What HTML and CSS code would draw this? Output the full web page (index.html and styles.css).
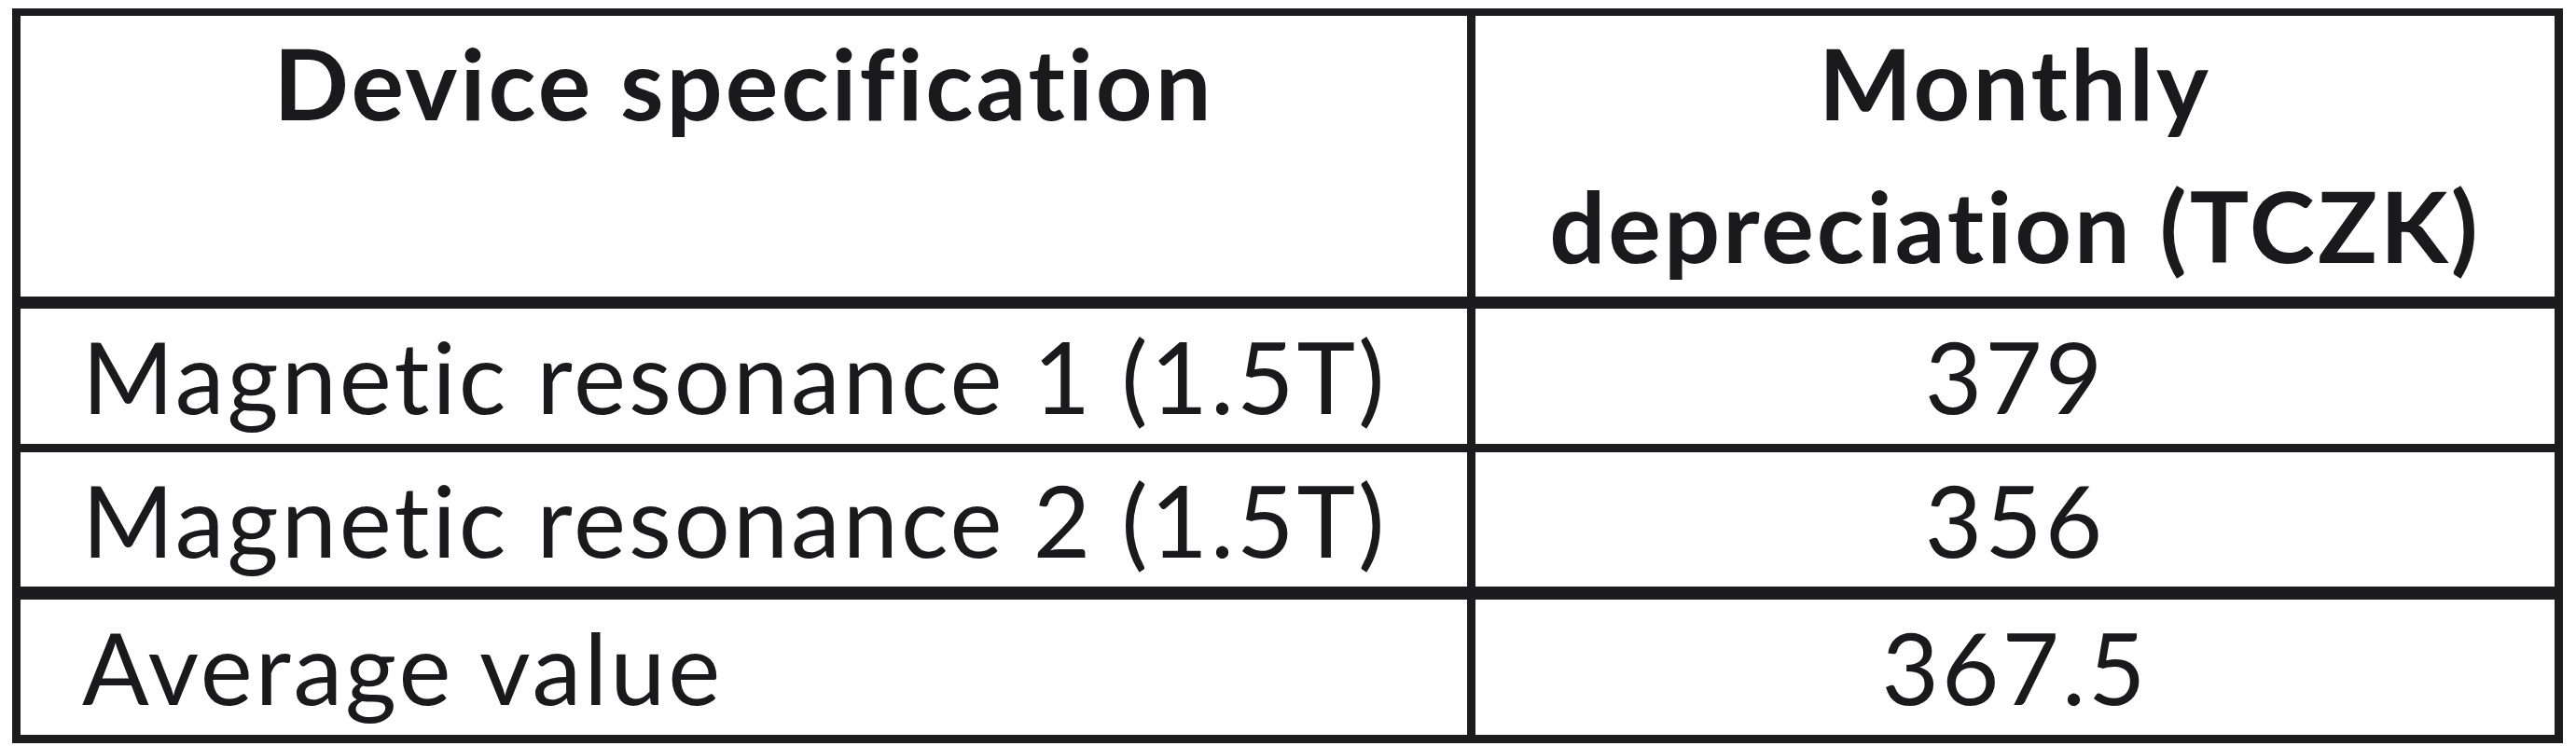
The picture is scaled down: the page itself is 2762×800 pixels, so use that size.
FILE: index.html
```html
<!DOCTYPE html>
<html lang="en">
<head>
<meta charset="utf-8">
<title>Monthly depreciation</title>
<link rel="stylesheet" href="styles.css">
</head>
<body>
<table class="spec-table">
  <thead>
    <tr class="row-head">
      <th class="col-left"><div class="head-text">Device specification</div></th>
      <th class="col-right"><div class="head-text">Monthly<br>depreciation (TCZK)</div></th>
    </tr>
  </thead>
  <tbody>
    <tr class="row-1">
      <td class="col-left">Magnetic resonance 1 (1.5T)</td>
      <td class="col-right num">379</td>
    </tr>
    <tr class="row-2">
      <td class="col-left">Magnetic resonance 2 (1.5T)</td>
      <td class="col-right num">356</td>
    </tr>
    <tr class="row-3">
      <td class="col-left">Average value</td>
      <td class="col-right num">367.5</td>
    </tr>
  </tbody>
</table>
</body>
</html>
```
FILE: styles.css
```css
html, body {
  margin: 0;
  padding: 0;
  background: #ffffff;
}

body {
  font-family: Lato, "Liberation Sans", sans-serif;
  color: #1a191c;
  font-variant-ligatures: none;
  font-feature-settings: "liga" 0, "clig" 0;
}

.spec-table {
  margin: 9px 0 0 13px;
  border-collapse: separate;
  border-spacing: 0;
  table-layout: fixed;
  border-style: solid;
  border-color: #1c1b1e;
  border-width: 8px 9px 9px 9px;
  font-size: 106px;
  letter-spacing: 3px;
}

.spec-table th,
.spec-table td {
  padding: 0;
  box-sizing: content-box;
  border-color: #1c1b1e;
  border-style: solid;
  border-width: 0;
}

.col-left {
  width: 1551px;
  border-right-width: 9px !important;
}

.col-right {
  width: 1157px;
}

.spec-table th {
  font-weight: 700;
  text-align: center;
  vertical-align: top;
  line-height: 153px;
}

.head-text {
  margin-top: -5px;
}

.row-head th {
  height: 295px;
  border-bottom-width: 13px;
}

.spec-table td {
  vertical-align: middle;
  line-height: 127px;
  font-weight: 400;
}

.spec-table td.col-left {
  padding-left: 66px;
  width: 1485px;
  text-align: left;
}

.spec-table td.num {
  text-align: center;
}

.row-1 td {
  height: 145px;
  border-bottom-width: 9px;
}

.row-2 td {
  height: 144px;
  border-bottom-width: 14px;
}

.row-3 td {
  height: 145px;
}
```
